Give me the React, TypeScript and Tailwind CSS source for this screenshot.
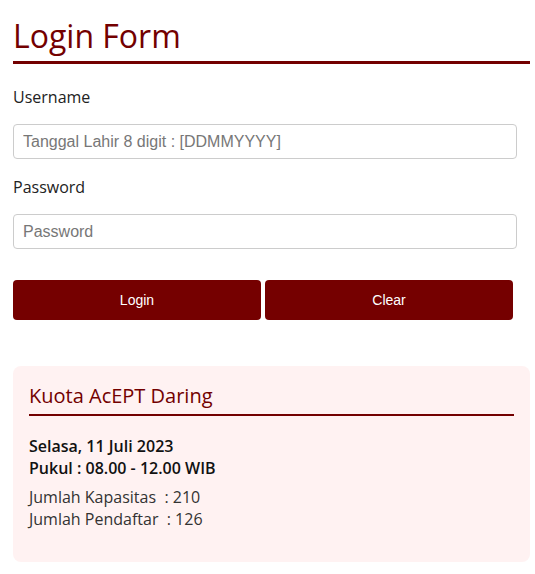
import React from "react";

export default function App() {
  return (
    <div className="min-h-[574px] w-[535px] bg-white px-[13px] pt-[14px]" style={{ fontFamily: '"Open Sans", sans-serif' }}>
      <h1 className="text-[32px] leading-[44px] font-medium text-[#730000] pb-[3px] border-b-[3px] border-[#730000] w-[517px]">
        Login Form
      </h1>
      <div className="w-[504px]">
        <label className="block mt-[22px] text-[16px] leading-[22px] text-[#222]">Username</label>
        <input
          className="mt-[16px] block w-full h-[35px] border border-[#cccccc] rounded-[4px] px-[9px] text-[16px] text-[#555] placeholder:text-[#777] outline-none"
          style={{ fontFamily: '"Liberation Sans", Arial, sans-serif' }}
          placeholder="Tanggal Lahir 8 digit : [DDMMYYYY]"
        />
        <label className="block mt-[17px] text-[16px] leading-[22px] text-[#222]">Password</label>
        <input
          type="password"
          className="mt-[16px] block w-full h-[35px] border border-[#cccccc] rounded-[4px] px-[9px] text-[16px] text-[#555] placeholder:text-[#777] outline-none"
          style={{ fontFamily: '"Liberation Sans", Arial, sans-serif' }}
          placeholder="Password"
        />
        <div className="mt-[31px] flex gap-[4px] w-[500px]" style={{ fontFamily: '"Liberation Sans", Arial, sans-serif' }}>
          <button className="flex-1 h-[40px] rounded-[4px] bg-[#750000] text-white text-[14px]">Login</button>
          <button className="flex-1 h-[40px] rounded-[4px] bg-[#750000] text-white text-[14px]">Clear</button>
        </div>
      </div>
      <div className="mt-[46px] w-[517px] h-[196px] rounded-[8px] bg-[#fff2f2] px-[16px] pt-[16px]">
        <h2 className="text-[20px] leading-[28px] text-[#730000] pb-[4px] border-b-2 border-[#730000]">
          Kuota AcEPT Daring
        </h2>
        <div className="mt-[19px] text-[16px] leading-[22px] font-semibold text-[#111]">
          <div>Selasa, 11 Juli 2023</div>
          <div>Pukul : 08.00 - 12.00 WIB</div>
        </div>
        <div className="mt-[7px] text-[16px] leading-[22px] text-[#333]">
          <div>Jumlah Kapasitas&nbsp; : 210</div>
          <div>Jumlah Pendaftar&nbsp; : 126</div>
        </div>
      </div>
    </div>
  );
}
